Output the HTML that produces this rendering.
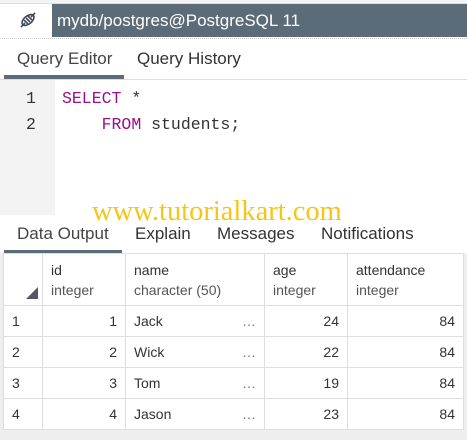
<!DOCTYPE html>
<html><head><style>
*{margin:0;padding:0;box-sizing:border-box}
body{width:467px;height:440px;background:#fff;font-family:"Liberation Sans",sans-serif;position:relative;overflow:hidden;color:#222}
.abs{position:absolute}
.title{left:52px;top:4px;width:415px;height:33px;background:#5b6b78;color:#fff;font-size:17px;line-height:33px;padding-left:5px}
.tab{font-size:17px;color:#333;top:49px}
.mono{font-family:"Liberation Mono",monospace;font-size:16.5px}
table{position:absolute;left:3px;top:253px;border-collapse:collapse;font-size:14px}
td{border:1px solid #ddd;height:31px;color:#333;padding:0 8px}
.h td{height:52px;vertical-align:middle;line-height:20px}
.sub{color:#555}
.r{text-align:right}
</style></head><body>
<div class="abs" style="left:0;top:0;width:467px;height:4px;border-bottom:1px solid #ddd;background:#f4f4f4"></div>
<div class="abs" style="left:0;top:4px;width:52px;height:33px;background:#fff"></div>
<svg class="abs" style="left:18px;top:10px" width="20" height="20" viewBox="0 0 20 20" fill="none" stroke="#3d4a57" stroke-width="1.6"><ellipse cx="10" cy="10" rx="7" ry="4" transform="rotate(-40 10 10)"/><path d="M3 17L7 13M13 7L17 3M8 8l4 4M6 10l4 4M10 6l4 4"/></svg>
<div class="abs title">mydb/postgres@PostgreSQL 11</div>
<div class="abs" style="left:0;top:38px;width:467px;height:1px;border-top:1px dotted #ccc"></div>
<div class="abs tab" style="left:17px;color:#444">Query Editor</div>
<div class="abs tab" style="left:137px">Query History</div>
<div class="abs" style="left:4px;top:75px;width:120px;height:4px;background:#5b6b78"></div>
<div class="abs" style="left:0;top:79px;width:467px;height:1px;background:#ddd"></div>
<div class="abs" style="left:0;top:80px;width:55px;height:135px;background:#f3f3f3"></div>
<div class="abs mono" style="left:26px;top:86px;line-height:26px;color:#333">1<br>2</div>
<div class="abs mono" style="left:62px;top:86px;line-height:26px;color:#333;white-space:pre"><span style="color:#990f8c">SELECT</span> *
    <span style="color:#990f8c">FROM</span> students;</div>
<div class="abs" style="left:92px;top:196px;font-family:'Liberation Serif',serif;font-size:28.5px;color:#f5c518">www.tutorialkart.com</div>
<div class="abs tab" style="left:17px;top:224px;color:#444">Data Output</div>
<div class="abs tab" style="left:135px;top:224px">Explain</div>
<div class="abs tab" style="left:217px;top:224px">Messages</div>
<div class="abs tab" style="left:321px;top:224px">Notifications</div>
<div class="abs" style="left:4px;top:250px;width:118px;height:4px;background:#5b6b78"></div>
<div class="abs" style="left:0;top:253px;width:467px;height:187px;background:#eee"></div>
<table>
<tr class="h" style="background:#fff"><td style="width:39px;position:relative"><span style="position:absolute;left:22px;bottom:6px;width:0;height:0;border-left:12px solid transparent;border-bottom:12px solid #556"></span></td><td style="width:83px">id<br><span class="sub">integer</span></td><td style="width:139px">name<br><span class="sub">character (50)</span></td><td style="width:83px">age<br><span class="sub">integer</span></td><td style="width:116px">attendance<br><span class="sub">integer</span></td></tr>
<tr style="background:#fff"><td>1</td><td class="r">1</td><td>Jack<span style="float:right;color:#777">…</span></td><td class="r">24</td><td class="r">84</td></tr>
<tr style="background:#fff"><td>2</td><td class="r">2</td><td>Wick<span style="float:right;color:#777">…</span></td><td class="r">22</td><td class="r">84</td></tr>
<tr style="background:#fff"><td>3</td><td class="r">3</td><td>Tom<span style="float:right;color:#777">…</span></td><td class="r">19</td><td class="r">84</td></tr>
<tr style="background:#fff"><td>4</td><td class="r">4</td><td>Jason<span style="float:right;color:#777">…</span></td><td class="r">23</td><td class="r">84</td></tr>
</table>
</body></html>
